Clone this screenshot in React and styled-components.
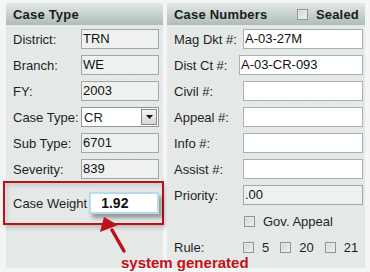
import React from "react";
import styled, { createGlobalStyle } from "styled-components";

const GlobalStyle = createGlobalStyle`
  html, body {
    margin: 0;
    padding: 0;
    background: #f4f6f5;
  }
  body {
    font-family: "Liberation Sans", Arial, sans-serif;
    font-size: 13px;
    color: #1c1c1c;
  }
`;

const leftRows = [
  { label: "District:", value: "TRN" },
  { label: "Branch:", value: "WE" },
  { label: "FY:", value: "2003" },
  { label: "Case Type:", value: "CR", select: true },
  { label: "Sub Type:", value: "6701" },
  { label: "Severity:", value: "839" },
];

const rightRows = [
  { label: "Mag Dkt #:", value: "A-03-27M" },
  { label: "Dist Ct #:", value: "A-03-CR-093", shift: true },
  { label: "Civil #:", value: "" },
  { label: "Appeal #:", value: "" },
  { label: "Info #:", value: "" },
  { label: "Assist #:", value: "" },
  { label: "Priority:", value: ".00", readOnly: true },
];

const App = () => {
  return (
    <Page>
      <GlobalStyle />
      <Columns>
        <Panel $width={157}>
          <Header>Case Type</Header>
          <Rows>
            {leftRows.map((row) => (
              <Row key={row.label} $labelWidth={68}>
                <Label>{row.label}</Label>
                {row.select ? (
                  <Select>
                    <span>{row.value}</span>
                    <DropButton>
                      <svg width="7" height="4" viewBox="0 0 7 4">
                        <path d="M0 0h7L3.5 4z" fill="#111" />
                      </svg>
                    </DropButton>
                  </Select>
                ) : (
                  <Field $readOnly $width={78}>
                    {row.value}
                  </Field>
                )}
              </Row>
            ))}
          </Rows>
          <WeightBox>
            <Label>Case Weight</Label>
            <WeightField>1.92</WeightField>
          </WeightBox>
        </Panel>
        <Panel $width={198}>
          <Header>
            <span>Case Numbers</span>
            <HeaderCheck>
              <Check />
              Sealed
            </HeaderCheck>
          </Header>
          <Rows>
            {rightRows.map((row) => (
              <Row key={row.label} $labelWidth={row.shift ? 65 : 69}>
                <Label>{row.label}</Label>
                <Field
                  $readOnly={row.readOnly}
                  $width={row.shift ? 124 : 120}
                  $white={!row.readOnly}
                >
                  {row.value}
                </Field>
              </Row>
            ))}
            <CheckRow $labelWidth={70}>
              <span />
              <CheckItem>
                <Check />
                Gov. Appeal
              </CheckItem>
            </CheckRow>
            <CheckRow $labelWidth={69}>
              <Label>Rule:</Label>
              <CheckGroup>
                <CheckItem>
                  <Check />5
                </CheckItem>
                <CheckItem>
                  <Check />
                  20
                </CheckItem>
                <CheckItem>
                  <Check />
                  21
                </CheckItem>
              </CheckGroup>
            </CheckRow>
          </Rows>
        </Panel>
      </Columns>
      <Annotation>
        <svg width="40" height="42" viewBox="0 0 40 42">
          <path
            d="M14 16 L26 37"
            stroke="#c0101c"
            strokeWidth="3.5"
            strokeLinecap="round"
          />
          <path d="M6 3 L20 11 L2 18 Z" fill="#c0101c" />
        </svg>
        <Note>system generated</Note>
      </Annotation>
    </Page>
  );
};

const Page = styled.div`
  position: relative;
  width: 370px;
  height: 272px;
  overflow: hidden;
`;

const Columns = styled.div`
  display: flex;
  gap: 4px;
  padding: 3px 0 0 6px;
`;

const Panel = styled.div`
  width: ${(p) => p.$width}px;
  height: 265px;
  background-color: #e5eae8;
  background-image: radial-gradient(rgba(0, 0, 0, 0.025) 1px, transparent 1px);
  background-size: 3px 3px;
  display: flex;
  flex-direction: column;
`;

const Header = styled.div`
  height: 22px;
  box-sizing: border-box;
  display: flex;
  align-items: center;
  justify-content: space-between;
  padding: 0 6px 0 7px;
  background: linear-gradient(#e3e9e7, #c6d1cd 55%, #aebcb7);
  font-weight: bold;
  font-size: 13px;
  color: #1b1b1b;
  letter-spacing: 0.2px;
`;

const HeaderCheck = styled.span`
  display: flex;
  align-items: center;
  gap: 8px;
`;

const Rows = styled.div`
  display: flex;
  flex-direction: column;
  gap: 6px;
  padding: 4px 0 0 7px;
`;

const Row = styled.div`
  display: grid;
  grid-template-columns: ${(p) => p.$labelWidth}px auto;
  align-items: center;
  height: 20px;
`;

const Label = styled.span`
  font-size: 13px;
  color: #1f1f1f;
  white-space: nowrap;
`;

const Field = styled.div`
  width: ${(p) => p.$width}px;
  height: 20px;
  box-sizing: border-box;
  border: 1px solid ${(p) => (p.$white ? "#a9b1ae" : "#9ea8a5")};
  background: ${(p) => (p.$white ? "#ffffff" : "#eef1f0")};
  padding: 1px 1px 0;
  font-size: 13px;
  line-height: 16px;
  color: #111;
`;

const Select = styled.div`
  width: 78px;
  height: 20px;
  box-sizing: border-box;
  border: 1px solid #8e9895;
  background: #fff;
  display: flex;
  align-items: center;
  justify-content: space-between;
  padding-left: 2px;
  font-size: 13px;
`;

const DropButton = styled.span`
  width: 16px;
  height: 16px;
  margin-right: 1px;
  box-sizing: border-box;
  border: 1px solid #8a8a8a;
  background: linear-gradient(#f4f4f4, #d6d6d6);
  display: flex;
  align-items: center;
  justify-content: center;
`;

const WeightBox = styled.div`
  margin: 2px -1px 0 -3px;
  height: 44px;
  box-sizing: border-box;
  border: 2px solid #bb101a;
  box-shadow: inset 2px 3px 5px rgba(0, 0, 0, 0.12),
    2px 3px 4px rgba(0, 0, 0, 0.18);
  display: flex;
  align-items: center;
  padding-left: 8px;
  gap: 2px;
`;

const WeightField = styled.div`
  width: 70px;
  height: 22px;
  box-sizing: border-box;
  border: 2px solid #b6dbea;
  background: #fff;
  box-shadow: 3px 4px 4px rgba(0, 0, 0, 0.35);
  font-weight: bold;
  font-size: 14px;
  line-height: 18px;
  padding-left: 10px;
  color: #111;
`;

const CheckRow = styled(Row)`
  height: 20px;
`;

const CheckGroup = styled.div`
  display: flex;
  gap: 11px;
`;

const CheckItem = styled.label`
  display: flex;
  align-items: center;
  gap: 8px;
  font-size: 13px;
  color: #1f1f1f;
`;

const Check = styled.span`
  display: inline-block;
  width: 11px;
  height: 11px;
  box-sizing: border-box;
  border: 1px solid #8f9593;
  background: linear-gradient(135deg, #cfd3d2, #f2f3f3);
  box-shadow: inset 0 0 0 1px #e9ebea;
`;

const Annotation = styled.div`
  position: absolute;
  left: 98px;
  top: 214px;
  display: flex;
  flex-direction: column;
  pointer-events: none;
`;

const Note = styled.span`
  margin: -2px 0 0 23px;
  font-weight: bold;
  font-size: 15px;
  color: #c3101b;
  white-space: nowrap;
`;

export default App;
